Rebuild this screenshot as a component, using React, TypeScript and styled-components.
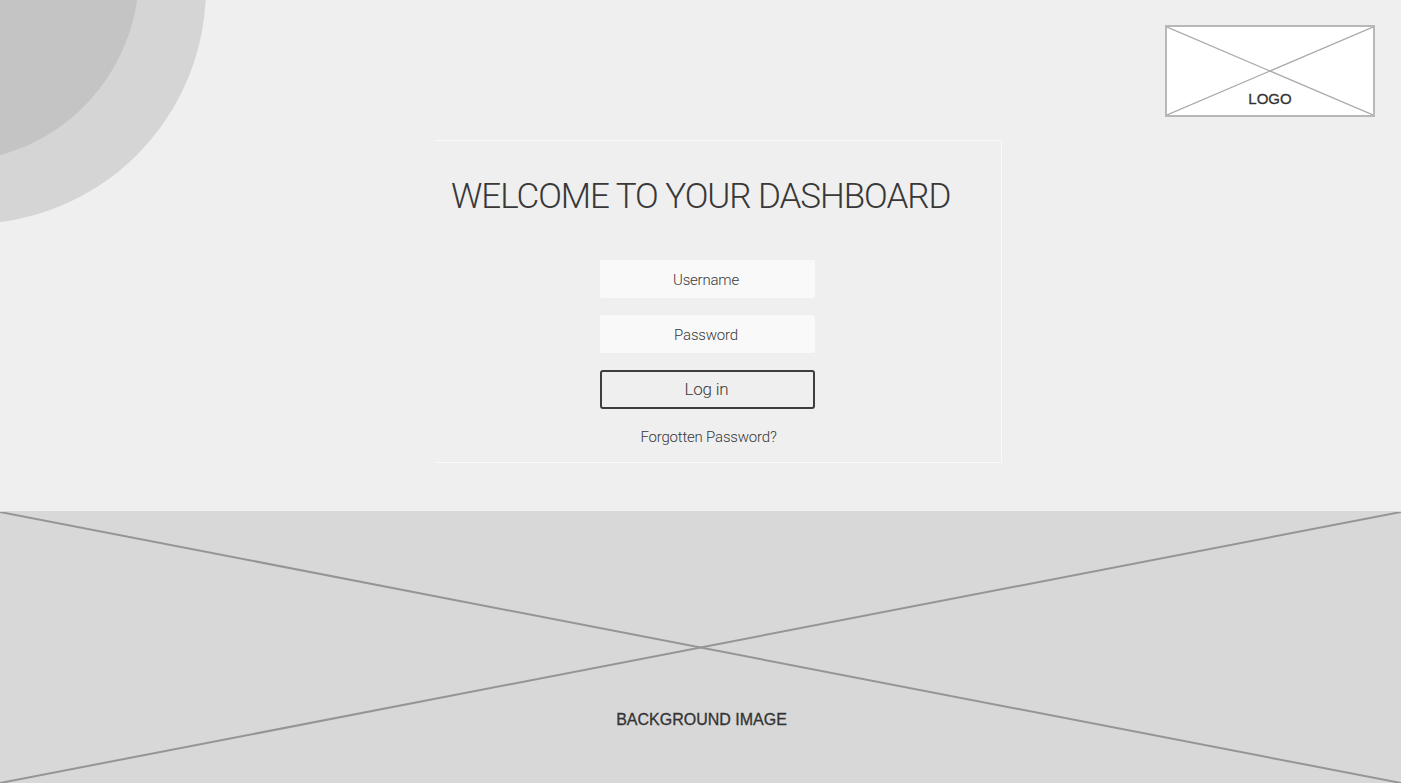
import styled, { createGlobalStyle } from 'styled-components';

const GlobalStyle = createGlobalStyle`
  html, body {
    margin: 0;
    padding: 0;
    background: #efefef;
  }
  * {
    box-sizing: border-box;
  }
`;

// X placeholder used for the logo and the background image
const Cross = ({ color, width }: { color: string; width: number }) => (
  <CrossSvg viewBox="0 0 100 100" preserveAspectRatio="none">
    <line x1="0" y1="0" x2="100" y2="100" stroke={color} strokeWidth={width} vectorEffect="non-scaling-stroke" />
    <line x1="100" y1="0" x2="0" y2="100" stroke={color} strokeWidth={width} vectorEffect="non-scaling-stroke" />
  </CrossSvg>
);

export default function App() {
  return (
    <>
      <GlobalStyle />
      <SPage>
        <STop>
          <SCircleOuter />
          <SCircleInner />
          <SHeader>
            <SLogo>
              <Cross color="#aaaaaa" width={1.2} />
              <SLogoText>LOGO</SLogoText>
            </SLogo>
          </SHeader>
          <SCard>
            <STitle>WELCOME TO YOUR DASHBOARD</STitle>
            <SForm>
              <SInput placeholder="Username" />
              <SInput placeholder="Password" />
              <SButton type="button">Log in</SButton>
              <SForgot>Forgotten Password?</SForgot>
            </SForm>
          </SCard>
        </STop>
        <SBottom>
          <Cross color="#959595" width={2} />
          <SBottomText>BACKGROUND IMAGE</SBottomText>
        </SBottom>
      </SPage>
    </>
  );
}

const SPage = styled.div`
  width: 1401px;
  height: 783px;
  display: flex;
  flex-direction: column;
  overflow: hidden;
  background: #efefef;
  color: #383838;
  font-family: Roboto, "Liberation Sans", sans-serif;
  will-change: opacity;
`;

const STop = styled.section`
  position: relative;
  height: 511px;
  flex: none;
  overflow: hidden;
`;

const SCircleOuter = styled.div`
  position: absolute;
  left: -266px;
  top: -248px;
  width: 472px;
  height: 472px;
  border-radius: 50%;
  background: #d5d5d5;
`;

const SCircleInner = styled.div`
  position: absolute;
  left: -239px;
  top: -216px;
  width: 378px;
  height: 378px;
  border-radius: 50%;
  background: #c4c4c4;
`;

const SHeader = styled.header`
  position: relative;
  display: flex;
  justify-content: flex-end;
  padding: 25px 26px 0 0;
`;

const SLogo = styled.div`
  position: relative;
  width: 210px;
  height: 92px;
  background: #fff;
  border: 2px solid #b8b8b8;
  display: flex;
  align-items: flex-end;
  justify-content: center;
  padding-bottom: 7px;
`;

const CrossSvg = styled.svg`
  position: absolute;
  inset: 0;
  width: 100%;
  height: 100%;
`;

const SLogoText = styled.span`
  position: relative;
  font-family: "Liberation Sans", Arial, sans-serif;
  font-size: 15px;
  line-height: 18px;
  color: #333;
  -webkit-text-stroke: 0.3px #333;
`;

const SCard = styled.div`
  position: relative;
  width: 566px;
  height: 323px;
  margin: 23px 0 0 436px;
  padding: 35px 0 0 15px;
  border: solid #fafafa;
  border-width: 1px 1px 1px 0;
  border-radius: 0 2px 2px 0;
`;

const STitle = styled.h1`
  margin: 0;
  font-size: 35px;
  line-height: 42px;
  font-weight: 300;
  letter-spacing: -1.05px;
  white-space: nowrap;
  color: #383838;
`;

const SForm = styled.form`
  width: 215px;
  margin: 42px 0 0 149px;
  display: flex;
  flex-direction: column;
`;

const SInput = styled.input`
  display: block;
  width: 100%;
  height: 38px;
  margin-bottom: 17px;
  padding: 2px 3px 0 0;
  border: none;
  outline: none;
  border-radius: 2px;
  background: #f9f9f9;
  text-align: center;
  font-family: inherit;
  font-size: 15px;
  font-weight: 300;
  letter-spacing: -0.2px;
  color: #383838;
  &::placeholder {
    color: #383838;
    opacity: 1;
  }
`;

const SButton = styled.button`
  height: 39px;
  padding: 0 2px 1px 0;
  border: 2px solid #3e3e3e;
  border-radius: 3px;
  background: transparent;
  font-family: inherit;
  font-size: 17px;
  font-weight: 300;
  letter-spacing: -0.2px;
  color: #383838;
`;

const SForgot = styled.div`
  margin-top: 18px;
  text-align: center;
  font-size: 15px;
  line-height: 20px;
  font-weight: 300;
  letter-spacing: -0.2px;
  padding-left: 2px;
`;

const SBottom = styled.section`
  position: relative;
  flex: 1;
  background: #d8d8d8;
  display: flex;
  align-items: flex-end;
  justify-content: center;
  padding-bottom: 53px;
  ${CrossSvg} {
    top: 1px;
    height: calc(100% - 1px);
  }
`;

const SBottomText = styled.span`
  position: relative;
  left: 1px;
  font-family: "Liberation Sans", Arial, sans-serif;
  font-size: 16px;
  line-height: 20px;
  color: #333;
  -webkit-text-stroke: 0.3px #333;
`;
